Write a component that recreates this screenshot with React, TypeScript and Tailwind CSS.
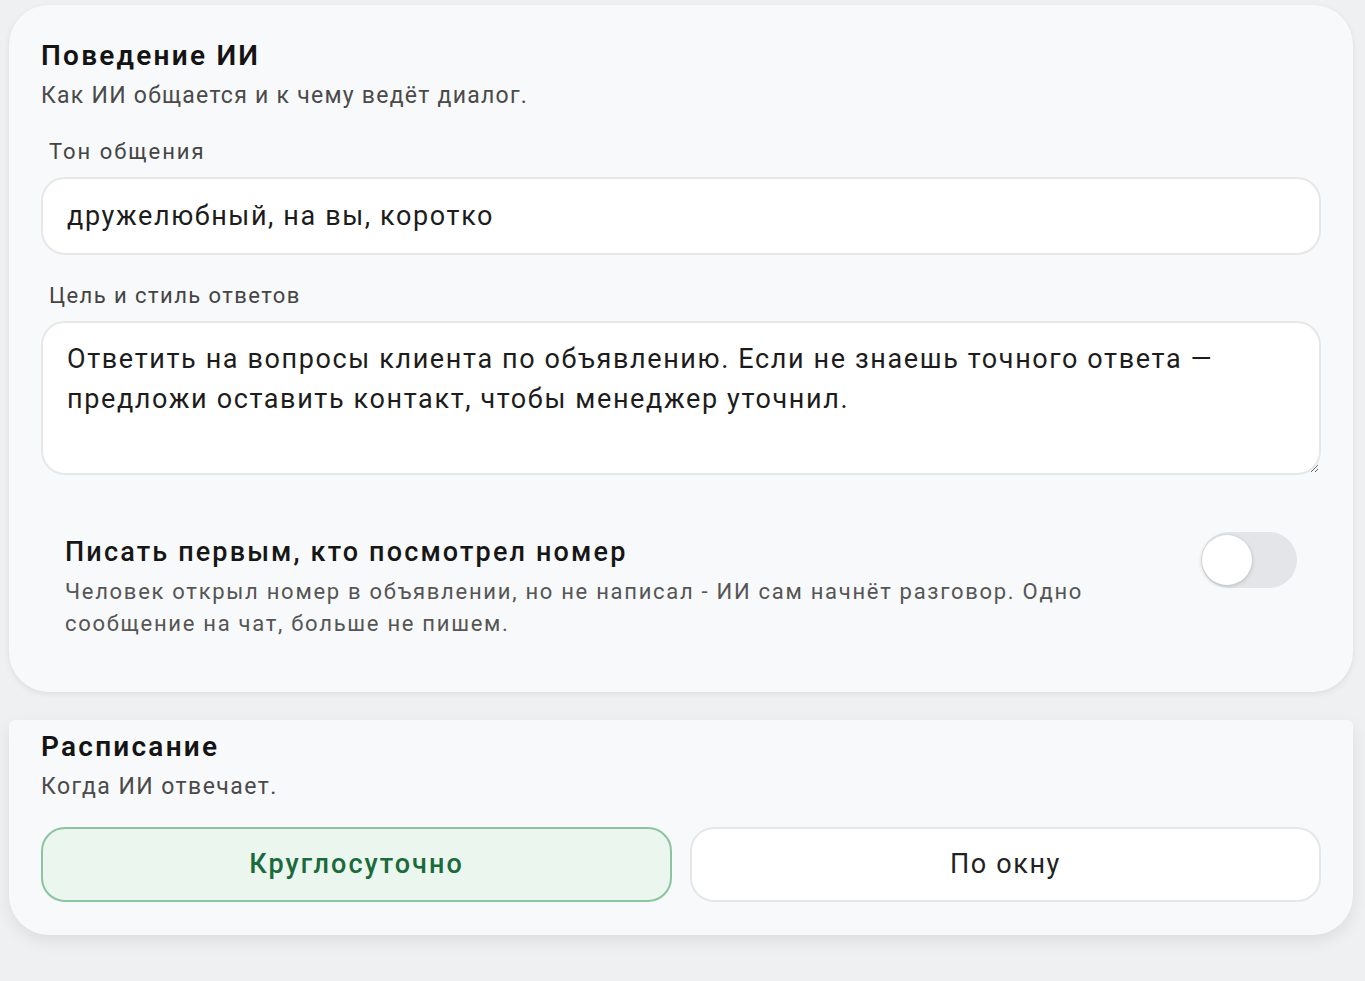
import React, { useState } from 'react';

const App: React.FC = () => {
  const [autoFirst, setAutoFirst] = useState(false);
  const [schedule, setSchedule] = useState<'always' | 'window'>('always');

  return (
    <div className="min-h-screen bg-[#eef0f2] pl-[9px] pr-[12px] pt-[5px] pb-10 font-['Roboto','Noto_Sans',sans-serif] text-[#1c1c1c]">
      {/* AI behaviour */}
      <section className="rounded-[40px] bg-[#f8f9fa] px-8 pt-[33px] pb-[24px] shadow-[0_2px_6px_rgba(0,0,0,0.08)]">
        <h2 className="text-[28px] leading-[36px] font-semibold tracking-[0.08em] text-[#141414]">Поведение ИИ</h2>
        <p className="mt-[7px] text-[23px] leading-[30px] tracking-[0.055em] text-[#4a4a4a]">Как ИИ общается и к чему ведёт диалог.</p>

        <label className="mt-[26px] block pl-2 text-[22px] leading-[30px] tracking-[0.09em] text-[#444]">Тон общения</label>
        <input
          defaultValue="дружелюбный, на вы, коротко"
          className="mt-[10px] block h-[78px] w-full rounded-[24px] border-2 border-[#e6e7e9] bg-white px-6 text-[27px] tracking-[0.06em] text-[#1c1c1c] outline-none"
        />

        <label className="mt-[26px] block pl-2 text-[22px] leading-[30px] tracking-[0.065em] text-[#444]">Цель и стиль ответов</label>
        <textarea
          defaultValue="Ответить на вопросы клиента по объявлению. Если не знаешь точного ответа — предложи оставить контакт, чтобы менеджер уточнил."
          className="mt-[10px] block h-[154px] w-full resize-y rounded-[24px] border-2 border-[#e6e7e9] bg-white pl-6 pr-[90px] pt-[16px] text-[27px] leading-[40px] tracking-[0.06em] text-[#1c1c1c] outline-none"
        />

        <div className="mt-[24px] flex items-start justify-between gap-8 px-6 pt-[35px] pb-[28px]">
          <div className="max-w-[1080px]">
            <h3 className="text-[27px] leading-[36px] font-medium tracking-[0.08em] text-[#161616]">Писать первым, кто посмотрел номер</h3>
            <p className="mt-[6px] text-[22px] leading-[32px] tracking-[0.078em] text-[#555]">
              Человек открыл номер в объявлении, но не написал - ИИ сам начнёт разговор. Одно сообщение на чат, больше не пишем.
            </p>
          </div>
          <button
            type="button"
            onClick={() => setAutoFirst(!autoFirst)}
            className={`relative mt-[-2px] h-[56px] w-[96px] shrink-0 rounded-full transition-colors ${autoFirst ? 'bg-[#3a9a5b]' : 'bg-[#e3e5e8]'}`}
            aria-label="Писать первым"
          >
            <span
              className={`absolute top-[3px] h-[50px] w-[50px] rounded-full bg-white shadow-[0_1px_4px_rgba(0,0,0,0.2)] transition-all ${autoFirst ? 'left-[44px]' : 'left-[1px]'}`}
            />
          </button>
        </div>
      </section>

      {/* Schedule */}
      <section className="mt-[28px] rounded-t-[6px] rounded-b-[40px] bg-[#f8f9fa] px-8 pt-[9px] pb-[33px] shadow-[0_6px_16px_rgba(0,0,0,0.08)]">
        <h2 className="text-[28px] leading-[36px] font-semibold tracking-[0.08em] text-[#141414]">Расписание</h2>
        <p className="mt-[7px] text-[23px] leading-[30px] tracking-[0.063em] text-[#4a4a4a]">Когда ИИ отвечает.</p>

        <div className="mt-[25px] grid grid-cols-2 gap-[18px]">
          <button
            type="button"
            onClick={() => setSchedule('always')}
            className={`h-[75px] rounded-[24px] border-2 text-[27px] tracking-[0.075em] ${schedule === 'always' ? 'border-[#8cc3a0] bg-[#eaf6ee] text-[#1b6a3b] font-medium' : 'border-[#e6e7e9] bg-white text-[#222]'}`}
          >
            Круглосуточно
          </button>
          <button
            type="button"
            onClick={() => setSchedule('window')}
            className={`h-[75px] rounded-[24px] border-2 text-[27px] tracking-[0.06em] ${schedule === 'window' ? 'border-[#8cc3a0] bg-[#eaf6ee] text-[#1b6a3b] font-medium' : 'border-[#e6e7e9] bg-white text-[#222]'}`}
          >
            По окну
          </button>
        </div>
      </section>
    </div>
  );
};

export default App;
